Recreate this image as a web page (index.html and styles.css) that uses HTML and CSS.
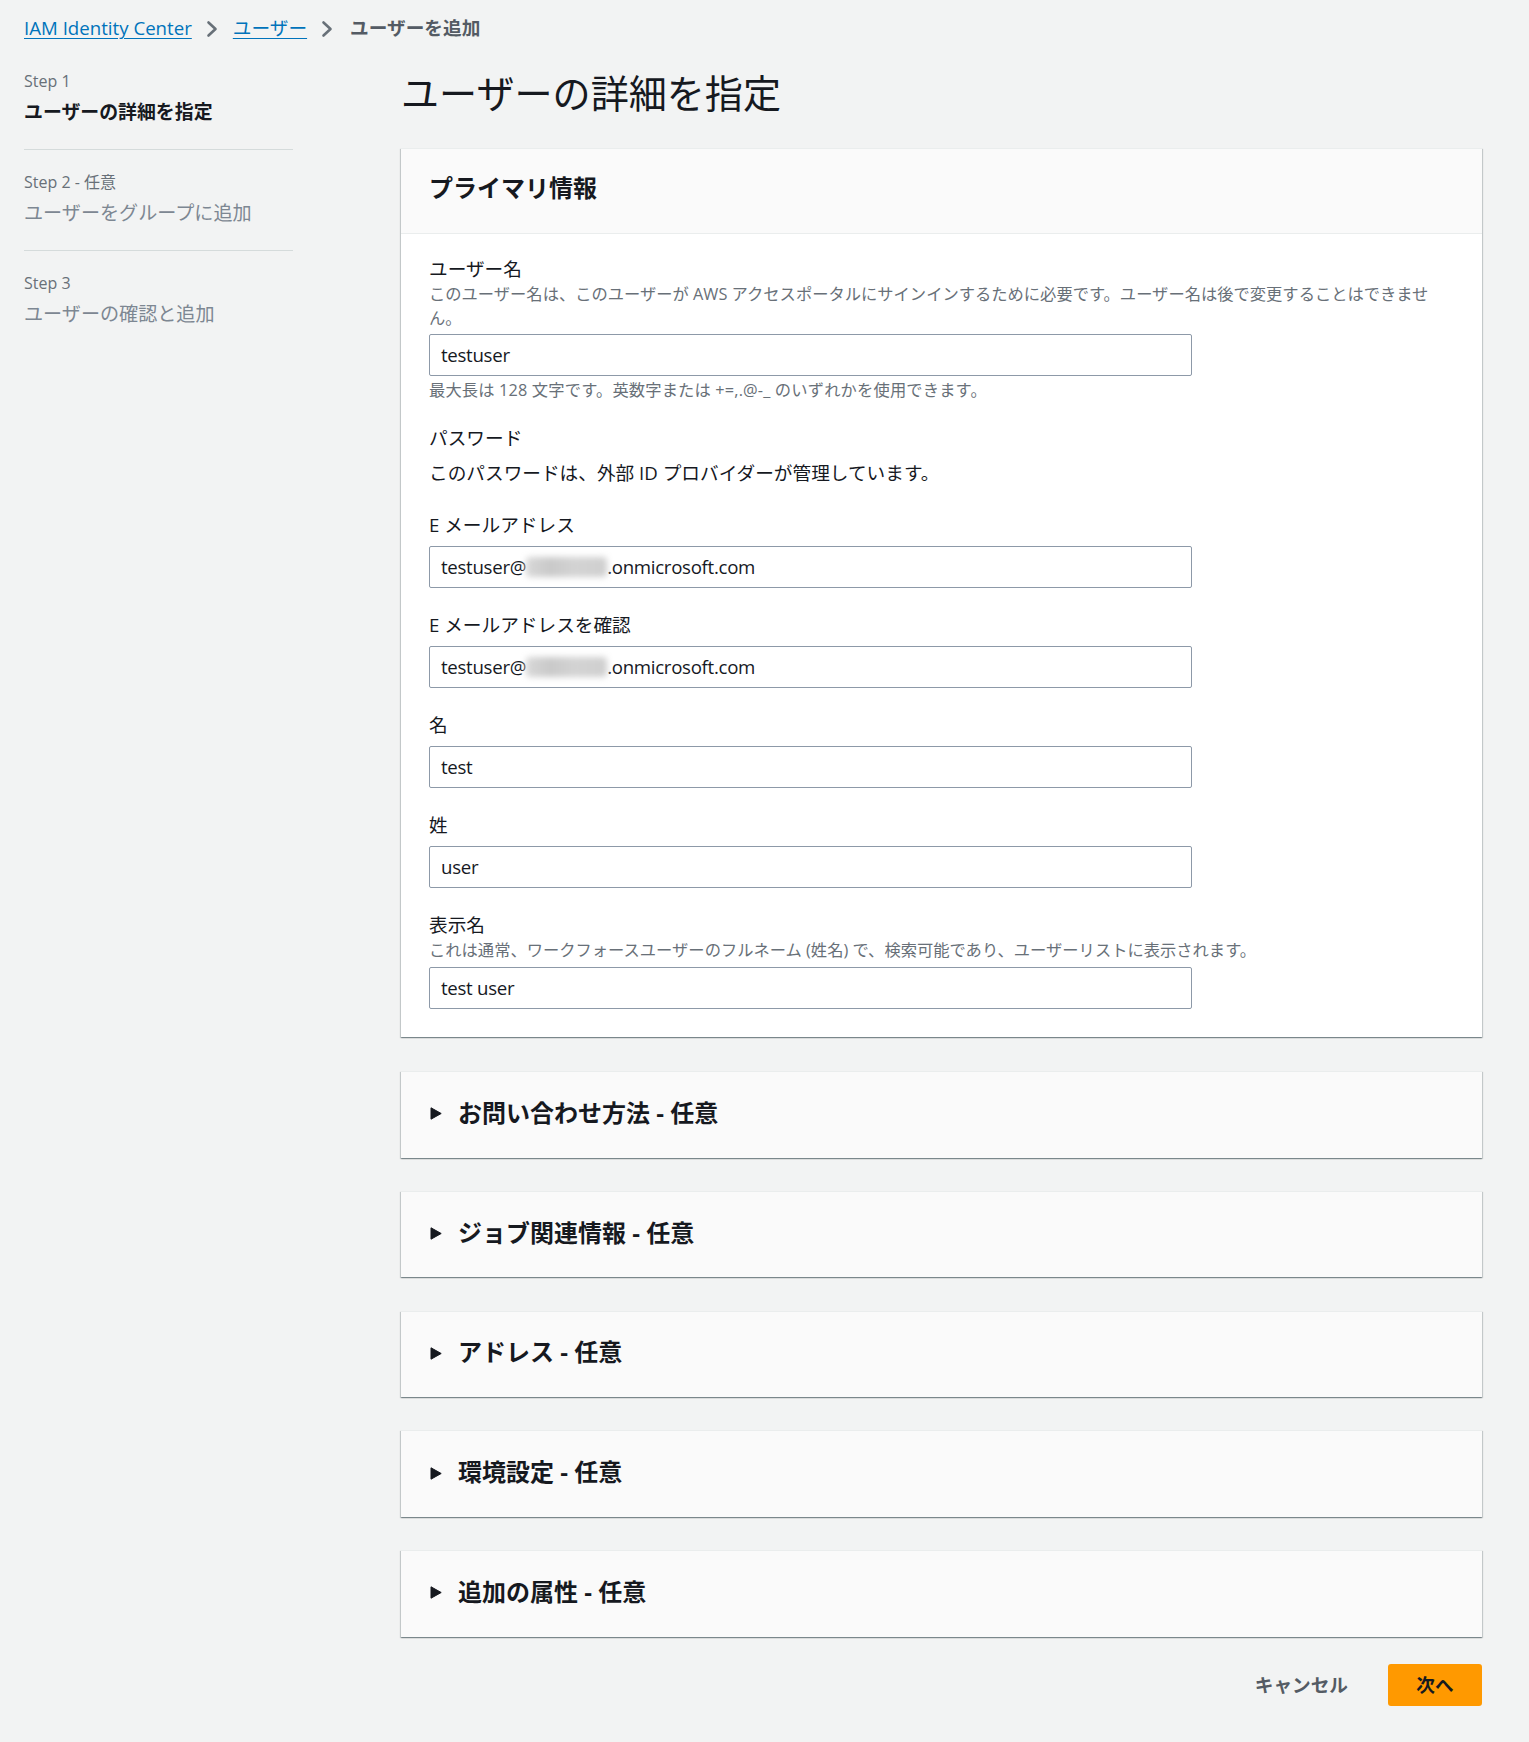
FILE: index.html
```html
<!DOCTYPE html>
<html lang="ja">
<head>
<meta charset="utf-8">
<title>ユーザーを追加</title>
<link rel="stylesheet" href="styles.css">
</head>
<body>
<div class="page">
  <nav class="breadcrumbs">
    <a class="crumb-link" href="#">IAM Identity Center</a>
    <svg class="chev" width="16" height="20" viewBox="0 0 16 20"><path d="M4.5 3.5 L11.5 10 L4.5 16.5" fill="none" stroke="#687078" stroke-width="2.6" stroke-linecap="round" stroke-linejoin="round"/></svg>
    <a class="crumb-link" href="#">ユーザー</a>
    <svg class="chev" width="16" height="20" viewBox="0 0 16 20"><path d="M4.5 3.5 L11.5 10 L4.5 16.5" fill="none" stroke="#687078" stroke-width="2.6" stroke-linecap="round" stroke-linejoin="round"/></svg>
    <span class="crumb-current">ユーザーを追加</span>
  </nav>

  <div class="layout">
    <aside class="steps">
      <ol class="step-list">
        <li class="step">
          <div class="step-num">Step 1</div>
          <div class="step-title active">ユーザーの詳細を指定</div>
        </li>
        <li class="step">
          <div class="step-num">Step 2 - 任意</div>
          <div class="step-title">ユーザーをグループに追加</div>
        </li>
        <li class="step">
          <div class="step-num">Step 3</div>
          <div class="step-title">ユーザーの確認と追加</div>
        </li>
      </ol>
    </aside>

    <main class="content">
      <h1 class="page-title">ユーザーの詳細を指定</h1>

      <section class="panel">
        <header class="panel-header">
          <h2 class="panel-title">プライマリ情報</h2>
        </header>
        <div class="panel-body">
          <div class="field">
            <div class="label">ユーザー名</div>
            <div class="desc">このユーザー名は、このユーザーが AWS アクセスポータルにサインインするために必要です。ユーザー名は後で変更することはできません。</div>
            <div class="input after-desc">testuser</div>
            <div class="constraint">最大長は 128 文字です。英数字または +=,.@-_ のいずれかを使用できます。</div>
          </div>

          <div class="field field-pw">
            <div class="label">パスワード</div>
            <div class="static-text">このパスワードは、外部 ID プロバイダーが管理しています。</div>
          </div>

          <div class="field">
            <div class="label">E メールアドレス</div>
            <div class="input">testuser@<span class="blur"></span>.onmicrosoft.com</div>
          </div>

          <div class="field">
            <div class="label">E メールアドレスを確認</div>
            <div class="input">testuser@<span class="blur"></span>.onmicrosoft.com</div>
          </div>

          <div class="field">
            <div class="label">名</div>
            <div class="input">test</div>
          </div>

          <div class="field">
            <div class="label">姓</div>
            <div class="input">user</div>
          </div>

          <div class="field">
            <div class="label">表示名</div>
            <div class="desc">これは通常、ワークフォースユーザーのフルネーム (姓名) で、検索可能であり、ユーザーリストに表示されます。</div>
            <div class="input after-desc-2">test user</div>
          </div>
        </div>
      </section>

      <div class="sections">
        <section class="expandable">
          <svg class="caret" width="12" height="13" viewBox="0 0 12 13"><path d="M1 0.8 L11.2 6.5 L1 12.2 Z" fill="#16191f" stroke="#16191f" stroke-width="1" stroke-linejoin="round"/></svg>
          <h2 class="exp-title">お問い合わせ方法 - 任意</h2>
        </section>
        <section class="expandable">
          <svg class="caret" width="12" height="13" viewBox="0 0 12 13"><path d="M1 0.8 L11.2 6.5 L1 12.2 Z" fill="#16191f" stroke="#16191f" stroke-width="1" stroke-linejoin="round"/></svg>
          <h2 class="exp-title">ジョブ関連情報 - 任意</h2>
        </section>
        <section class="expandable">
          <svg class="caret" width="12" height="13" viewBox="0 0 12 13"><path d="M1 0.8 L11.2 6.5 L1 12.2 Z" fill="#16191f" stroke="#16191f" stroke-width="1" stroke-linejoin="round"/></svg>
          <h2 class="exp-title">アドレス - 任意</h2>
        </section>
        <section class="expandable">
          <svg class="caret" width="12" height="13" viewBox="0 0 12 13"><path d="M1 0.8 L11.2 6.5 L1 12.2 Z" fill="#16191f" stroke="#16191f" stroke-width="1" stroke-linejoin="round"/></svg>
          <h2 class="exp-title">環境設定 - 任意</h2>
        </section>
        <section class="expandable">
          <svg class="caret" width="12" height="13" viewBox="0 0 12 13"><path d="M1 0.8 L11.2 6.5 L1 12.2 Z" fill="#16191f" stroke="#16191f" stroke-width="1" stroke-linejoin="round"/></svg>
          <h2 class="exp-title">追加の属性 - 任意</h2>
        </section>
      </div>

      <div class="actions">
        <button class="btn btn-link" type="button">キャンセル</button>
        <button class="btn btn-primary" type="button">次へ</button>
      </div>
    </main>
  </div>
</div>
</body>
</html>
```

FILE: styles.css
```css
* {
  box-sizing: border-box;
}

html, body {
  margin: 0;
  padding: 0;
}

body {
  background: #f2f3f3;
  color: #16191f;
  font-family: "Open Sans", "Noto Sans CJK JP", "Noto Sans", sans-serif;
  font-size: 18.67px;
  line-height: 26px;
}

.page {
  padding: 15px 47px 36px 24px;
}

/* Breadcrumbs */
.breadcrumbs {
  display: flex;
  align-items: center;
  height: 26px;
  line-height: 26px;
}

.crumb-link {
  color: #0073bb;
  text-decoration: underline;
  text-underline-offset: 3px;
  text-decoration-thickness: 1px;
}

.chev {
  display: block;
  margin: 2px 13px 0 12px;
  flex: none;
}

.crumb-current {
  color: #545b64;
  font-weight: 700;
  margin-left: 2px;
}

/* Layout */
.layout {
  display: grid;
  grid-template-columns: 269px 1fr;
  column-gap: 108px;
  margin-top: 28px;
}

/* Steps */
.step-list {
  list-style: none;
  margin: 0;
  padding: 0;
}

.step {
  padding: 21px 0 24px;
  border-bottom: 1px solid #d5dbdb;
}

.step:first-child {
  padding-top: 1px;
}

.step:last-child {
  border-bottom: none;
}

.step-num {
  font-size: 16px;
  line-height: 22px;
  color: #687078;
}

.step-title {
  margin-top: 7px;
  font-size: 19.1px;
  line-height: 26px;
  color: #7d8792;
}

.step-title.active {
  color: #16191f;
  font-weight: 700;
  font-size: 18.9px;
}

/* Main */
.content {
  display: flex;
  flex-direction: column;
}

.page-title {
  margin: 0 0 31px;
  font-size: 38.1px;
  line-height: 48px;
  font-weight: 400;
  color: #16191f;
}

.panel {
  background: #ffffff;
  border-top: 1px solid #eaeded;
  box-shadow: 0 1px 1px 0 rgba(0, 28, 36, 0.3), 1px 1px 1px 0 rgba(0, 28, 36, 0.15), -1px 1px 1px 0 rgba(0, 28, 36, 0.15);
}

.panel-header {
  height: 85px;
  display: flex;
  align-items: center;
  padding: 0 28px 6px;
  background: #fafafa;
  border-bottom: 1px solid #eaeded;
}

.panel-title {
  margin: 0;
  font-size: 24px;
  line-height: 30px;
  font-weight: 700;
}

.panel-body {
  padding: 22px 28px 28px;
  display: flex;
  flex-direction: column;
  gap: 24px;
}

.field {
  display: flex;
  flex-direction: column;
}

.field-pw {
  margin-bottom: 2px;
}

.label {
  line-height: 26px;
  color: #16191f;
}

.desc {
  font-size: 16.3px;
  line-height: 24px;
  color: #687078;
}

.constraint {
  margin-top: 3px;
  font-size: 16.3px;
  line-height: 22px;
  color: #687078;
  letter-spacing: 0.15px;
}

.static-text {
  margin-top: 9px;
  line-height: 26px;
}

.input {
  width: 763px;
  height: 42px;
  margin-top: 8px;
  padding: 0 11px;
  display: flex;
  align-items: center;
  background: #ffffff;
  border: 1px solid #8d99a8;
  border-radius: 2px;
  color: #16191f;
  white-space: nowrap;
  letter-spacing: -0.3px;
}

.input.after-desc {
  margin-top: 4px;
}

.input.after-desc-2 {
  margin-top: 5px;
}

.blur {
  display: inline-block;
  width: 81px;
  height: 20px;
  margin: 0;
  background: linear-gradient(90deg, #d8d8d8, #c9c9c9 30%, #d3d3d3 60%, #cfcfcf);
  filter: blur(3px);
  border-radius: 4px;
}

/* Expandable sections */
.sections {
  margin-top: 34px;
  display: flex;
  flex-direction: column;
  gap: 33.3px;
}

.expandable {
  height: 86.5px;
  display: flex;
  align-items: center;
  padding: 0 28px 4px 29px;
  background: #fafafa;
  border-top: 1px solid #eaeded;
  box-shadow: 0 1px 1px 0 rgba(0, 28, 36, 0.3), 1px 1px 1px 0 rgba(0, 28, 36, 0.15), -1px 1px 1px 0 rgba(0, 28, 36, 0.15);
}

.caret {
  display: block;
  flex: none;
  margin-right: 16px;
  margin-top: 2px;
}

.exp-title {
  margin: 0;
  font-size: 24px;
  line-height: 30px;
  font-weight: 700;
  color: #16191f;
}

/* Actions */
.actions {
  margin-top: 27px;
  display: flex;
  justify-content: flex-end;
  align-items: center;
  gap: 11px;
}

.btn {
  font-family: inherit;
  font-size: 18.67px;
  font-weight: 700;
  line-height: 26px;
  height: 42px;
  border-radius: 3px;
  cursor: pointer;
}

.btn-link {
  background: transparent;
  border: 2px solid transparent;
  color: #545b64;
  padding: 0 27px;
}

.btn-primary {
  background: #ff9900;
  border: 2px solid #ff9900;
  color: #16191f;
  padding: 0 26px;
  width: 94px;
}
```
